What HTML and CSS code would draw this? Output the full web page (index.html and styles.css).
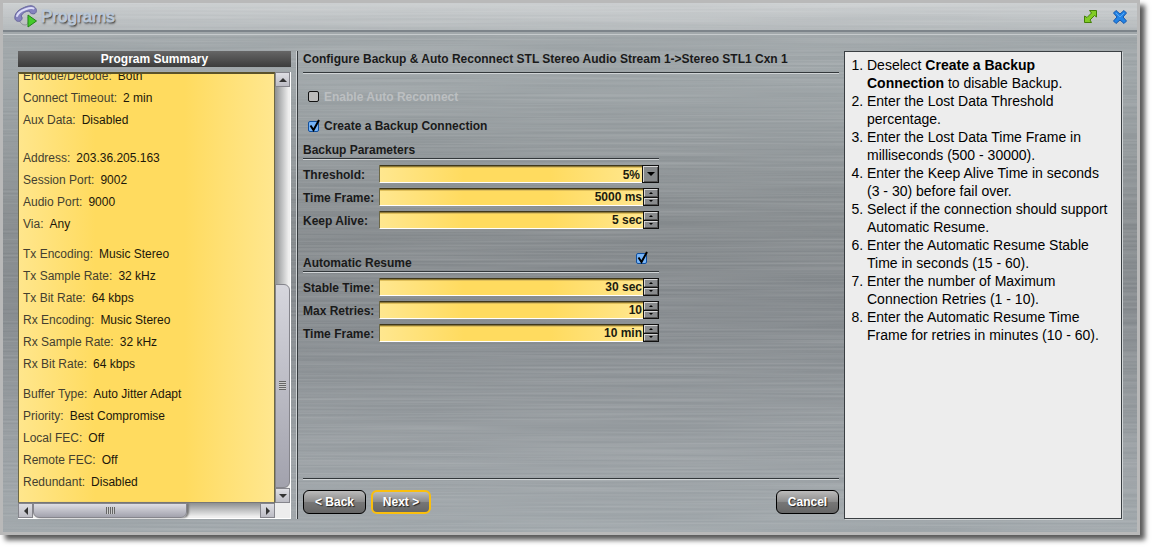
FILE: index.html
```html
<!DOCTYPE html>
<html lang="en">
<head>
<meta charset="utf-8">
<title>Programs</title>
<link rel="stylesheet" href="styles.css">
</head>
<body>
<main class="window">
  <svg class="brushed" aria-hidden="true">
    <filter id="brush" x="0" y="0" width="100%" height="100%">
      <feTurbulence type="fractalNoise" baseFrequency="0.004 0.5" numOctaves="2" seed="4"/>
      <feColorMatrix values="0 0 0 0 1  0 0 0 0 1  0 0 0 0 1  0.26 0 0 0 -0.08"/>
    </filter>
    <rect width="100%" height="100%" filter="url(#brush)"/>
  </svg>
  <header class="titlebar">
    <svg class="logo" width="24" height="24" viewBox="0 0 24 24" aria-hidden="true">
      <path d="M5 15.500C7 18 8 20 11 20c3 0 4-3 3-8" fill="none" stroke="#8e9499"/>
      <path d="M1 14C0 9 4 5 9 3c5-2.500 9-3 11.500-1C23 4 23 7 21 8.500c-2 1-5.500 0-5.500-2.500-4 0-7 2-8.500 5 1.500 1 1.500 3 0 4.500-2 1.500-5 1-6-1.500z" fill="#8583bd" stroke="#66659c"/>
      <path d="M3 11c1-3.500 5-5.500 8.500-6.800C15 3 18 2.500 19.500 3.500" fill="none" stroke="#dcdcf8" stroke-width="2" stroke-linecap="round"/>
      <path d="M14 10l8.500 6L14 22z" fill="#45cb2b" stroke="#238317"/>
    </svg>
    <h1 class="title">Programs</h1>
    <button class="tool" aria-label="Resize">
      <svg width="16" height="16" viewBox="0 0 16 16"><path d="M7.500 1.500h7V8l-2-1.500-4.500 4.500 1.500 2.500h-7V7l2.500 1.500L9.500 4z" fill="#82cc26" stroke="#438008"/></svg>
    </button>
    <button class="tool" aria-label="Close">
      <svg width="16" height="16" viewBox="0 0 16 16"><path d="M4 1.500l4 3.500L12 1.500 14.500 4 11 8l3.500 4-2.500 2.500L8 11l-4 3.500L1.500 12 5 8 1.500 4z" fill="#2384e6" stroke="#1457ad"/><path d="M4 4l4 4 4-4" fill="none" stroke="#5aa9f5"/></svg>
    </button>
  </header>

  <div class="content">
    <section class="summary">
      <h2 class="summary-title">Program Summary</h2>
      <div class="scroller">
        <div class="details">
          <dl class="group">
            <div class="item"><dt>Encode/Decode:</dt><dd>Both</dd></div>
            <div class="item"><dt>Connect Timeout:</dt><dd>2 min</dd></div>
            <div class="item"><dt>Aux Data:</dt><dd>Disabled</dd></div>
          </dl>
          <dl class="group group-address">
            <div class="item"><dt>Address:</dt><dd>203.36.205.163</dd></div>
            <div class="item"><dt>Session Port:</dt><dd>9002</dd></div>
            <div class="item"><dt>Audio Port:</dt><dd>9000</dd></div>
            <div class="item"><dt>Via:</dt><dd>Any</dd></div>
          </dl>
          <dl class="group">
            <div class="item"><dt>Tx Encoding:</dt><dd>Music Stereo</dd></div>
            <div class="item"><dt>Tx Sample Rate:</dt><dd>32 kHz</dd></div>
            <div class="item"><dt>Tx Bit Rate:</dt><dd>64 kbps</dd></div>
            <div class="item"><dt>Rx Encoding:</dt><dd>Music Stereo</dd></div>
            <div class="item"><dt>Rx Sample Rate:</dt><dd>32 kHz</dd></div>
            <div class="item"><dt>Rx Bit Rate:</dt><dd>64 kbps</dd></div>
          </dl>
          <dl class="group">
            <div class="item"><dt>Buffer Type:</dt><dd>Auto Jitter Adapt</dd></div>
            <div class="item"><dt>Priority:</dt><dd>Best Compromise</dd></div>
            <div class="item"><dt>Local FEC:</dt><dd>Off</dd></div>
            <div class="item"><dt>Remote FEC:</dt><dd>Off</dd></div>
            <div class="item"><dt>Redundant:</dt><dd>Disabled</dd></div>
          </dl>
        </div>
        <div class="bar bar-v">
          <button class="arrow" aria-label="Scroll up"><svg width="8" height="4"><path d="M4 0l4 4H0z"/></svg></button>
          <div class="track-v"><div class="thumb-v"><span class="grip-v"></span></div></div>
          <button class="arrow" aria-label="Scroll down"><svg width="8" height="4"><path d="M0 0h8L4 4z"/></svg></button>
        </div>
        <div class="bar bar-h">
          <button class="arrow" aria-label="Scroll left"><svg width="4" height="8"><path d="M4 0v8L0 4z"/></svg></button>
          <div class="track-h"><div class="thumb-h"><span class="grip-h"></span></div></div>
          <button class="arrow" aria-label="Scroll right"><svg width="4" height="8"><path d="M0 0l4 4-4 4z"/></svg></button>
        </div>
        <div class="corner"></div>
      </div>
    </section>

    <form class="wizard">
      <h2 class="heading">Configure Backup &amp; Auto Reconnect STL Stereo Audio Stream 1-&gt;Stereo STL1 Cxn 1</h2>
      <label class="option option-off"><input class="check" type="checkbox" disabled>Enable Auto Reconnect</label>
      <label class="option"><input class="check" type="checkbox" checked>Create a Backup Connection</label>

      <section class="params">
        <h3 class="subheading">Backup Parameters</h3>
        <div class="row">
          <label for="threshold">Threshold:</label>
          <select class="field" id="threshold"><option>5%</option></select>
          <span class="drop" aria-hidden="true"><svg width="8" height="4"><path d="M0 0h8L4 4z"/></svg></span>
        </div>
        <div class="row">
          <label for="frame">Time Frame:</label>
          <input class="field" id="frame" type="text" value="5000 ms">
          <span class="spin"><button type="button" aria-label="Increase"><svg width="4" height="2"><path d="M2 0l2 2H0z"/></svg></button><button type="button" aria-label="Decrease"><svg width="4" height="2"><path d="M0 0h4L2 2z"/></svg></button></span>
        </div>
        <div class="row">
          <label for="alive">Keep Alive:</label>
          <input class="field" id="alive" type="text" value="5 sec">
          <span class="spin"><button type="button" aria-label="Increase"><svg width="4" height="2"><path d="M2 0l2 2H0z"/></svg></button><button type="button" aria-label="Decrease"><svg width="4" height="2"><path d="M0 0h4L2 2z"/></svg></button></span>
        </div>
      </section>

      <section class="params params-resume">
        <h3 class="subheading"><label for="resume">Automatic Resume</label><input class="check" id="resume" type="checkbox" checked></h3>
        <div class="row">
          <label for="stable">Stable Time:</label>
          <input class="field" id="stable" type="text" value="30 sec">
          <span class="spin"><button type="button" aria-label="Increase"><svg width="4" height="2"><path d="M2 0l2 2H0z"/></svg></button><button type="button" aria-label="Decrease"><svg width="4" height="2"><path d="M0 0h4L2 2z"/></svg></button></span>
        </div>
        <div class="row">
          <label for="retries">Max Retries:</label>
          <input class="field" id="retries" type="text" value="10">
          <span class="spin"><button type="button" aria-label="Increase"><svg width="4" height="2"><path d="M2 0l2 2H0z"/></svg></button><button type="button" aria-label="Decrease"><svg width="4" height="2"><path d="M0 0h4L2 2z"/></svg></button></span>
        </div>
        <div class="row">
          <label for="retryframe">Time Frame:</label>
          <input class="field" id="retryframe" type="text" value="10 min">
          <span class="spin"><button type="button" aria-label="Increase"><svg width="4" height="2"><path d="M2 0l2 2H0z"/></svg></button><button type="button" aria-label="Decrease"><svg width="4" height="2"><path d="M0 0h4L2 2z"/></svg></button></span>
        </div>
      </section>

      <footer class="actions">
        <button class="btn" type="button">&lt; Back</button>
        <button class="btn btn-next" type="button">Next &gt;</button>
        <button class="btn btn-cancel" type="button">Cancel</button>
      </footer>
    </form>

    <aside class="help">
      <ol class="steps">
        <li>Deselect <b>Create a Backup Connection</b> to disable Backup.</li>
        <li>Enter the Lost Data Threshold percentage.</li>
        <li>Enter the Lost Data Time Frame in milliseconds (500 - 30000).</li>
        <li>Enter the Keep Alive Time in seconds (3 - 30) before fail over.</li>
        <li>Select if the connection should support Automatic Resume.</li>
        <li>Enter the Automatic Resume Stable Time in seconds (15 - 60).</li>
        <li>Enter the number of Maximum Connection Retries (1 - 10).</li>
        <li>Enter the Automatic Resume Time Frame for retries in minutes (10 - 60).</li>
      </ol>
    </aside>
  </div>
</main>
</body>
</html>
```
FILE: styles.css
```css
* { box-sizing: border-box; }

body {
  margin: 0;
  height: 100vh;
  padding: 0 15px 15px 0;
  display: flex;
  background: #fff;
  font: 12px/16px "Liberation Sans", Arial, sans-serif;
  color: #1a1a1a;
}

h1, h2, h3, dl, dd, ol { margin: 0; padding: 0; }
button { padding: 0; font: inherit; }
svg { display: block; }

.window {
  flex: 1;
  min-width: 0;
  position: relative;
  isolation: isolate;
  display: flex;
  flex-direction: column;
  border: 3px solid #b9b9b9;
  background: linear-gradient(#9fa5a8 0, #9ba2a5 14%, #84898c 42%, #82878b 58%, #999fa3 88%, #9ea5a9);
  box-shadow: 5px 5px 5px rgba(0, 0, 0, .65);
}

.brushed {
  position: absolute;
  inset: 0;
  width: 100%;
  height: 100%;
  z-index: -1;
}

.titlebar {
  height: 32px;
  flex: none;
  display: flex;
  align-items: center;
  gap: 14px;
  padding: 0 9px 4px 11px;
  background: linear-gradient(rgba(255, 255, 255, .45), rgba(255, 255, 255, .2));
  background-size: 100% 27px;
  background-repeat: no-repeat;
  border-bottom: 1px solid #c6cacc;
  box-shadow: inset 0 -2px #a2a8ab, inset 0 -4px #7d848a;
}

.title {
  margin-left: -11px;
  margin-right: auto;
  font-size: 17px;
  line-height: 24px;
  font-weight: normal;
  color: #c3d0df;
  -webkit-text-stroke: 1px #b9c6d6;
  text-shadow: 1px 1px 1px #3a3f45, 1px 2px 2px #555;
}

.tool { border: 0; background: none; }

.content {
  flex: 1;
  min-height: 0;
  display: grid;
  grid-template-columns: 273px minmax(0, 1fr) 278px;
  gap: 5px;
  padding: 16px 15px 13px;
}

.summary { display: flex; flex-direction: column; gap: 5px; min-height: 0; }

.summary-title {
  font-size: 12px;
  line-height: 16px;
  text-align: center;
  color: #fff;
  background: linear-gradient(#666, #3c3c3c);
}

.scroller {
  flex: 1;
  min-height: 0;
  display: grid;
  grid-template: minmax(0, 1fr) 15px / minmax(0, 1fr) 15px;
  border-right: 1px solid #fff;
  border-bottom: 1px solid #fff;
}

.details {
  display: flex;
  flex-direction: column;
  justify-content: flex-end;
  gap: 8px;
  overflow: hidden;
  padding: 0 4px 9px;
  border: 1px solid #6d6845;
  border-top: 2px solid #5b522a;
  border-bottom-color: #777;
  background: linear-gradient(90deg, #ffe68c, #ffdb5f 30%, #ffdb5f 65%, #ffe78f);
}

.group-address { margin-top: 8px; }

.item { display: flex; gap: 6px; line-height: 22px; white-space: nowrap; }
.item dt { color: #443f30; }
.item dd { color: #1c170a; }

.bar { display: flex; }
.bar-v { flex-direction: column; }

.arrow {
  width: 15px;
  height: 15px;
  flex: none;
  display: grid;
  place-items: center;
  border: 1px solid #85858c;
  background: linear-gradient(#dedee3, #bcbcc4);
}

.arrow svg { fill: #333; }

.track-v {
  flex: 1;
  display: flex;
  flex-direction: column;
  justify-content: flex-end;
  background: linear-gradient(90deg, #8c8f91, #eee 90%);
}

.thumb-v {
  height: 51%;
  display: grid;
  place-items: center;
  border: 1px solid #85858c;
  border-radius: 0 6px 6px 0;
  background: linear-gradient(#d6d6dd, #a2a2ad);
}

.track-h { flex: 1; background: linear-gradient(#8c8f91, #eee 90%); }

.thumb-h {
  width: 68%;
  height: 100%;
  display: grid;
  place-items: center;
  border: 1px solid #85858c;
  border-radius: 0 0 6px 6px;
  background: linear-gradient(#dedee4, #a2a2ad);
  box-shadow: 2px 0 2px #777;
}

.grip-v { width: 7px; height: 9px; background: repeating-linear-gradient(#666 0 1px, #ccc 1px 2px); }
.grip-h { width: 9px; height: 7px; background: repeating-linear-gradient(90deg, #666 0 1px, #ccc 1px 2px); }
.corner { background: #ededed; }

.wizard {
  display: flex;
  flex-direction: column;
  align-items: flex-start;
  border-left: 1px solid #d0d4d6;
  box-shadow: inset 1px 0 #33383b;
  padding-left: 6px;
  font-weight: bold;
}

.heading {
  align-self: stretch;
  font-size: 12px;
  line-height: 16px;
  white-space: nowrap;
  padding-bottom: 5px;
  border-bottom: 1px solid #33383b;
  box-shadow: 0 1px #d0d4d6;
}

.option {
  display: flex;
  align-items: center;
  gap: 3px;
  margin-left: 4px;
  margin-top: 13px;
}

.heading + .option { margin-top: 16px; }
.option-off { color: #bcbfc1; }

.check {
  appearance: none;
  width: 14px;
  height: 14px;
  margin: 0;
  background: url("data:image/svg+xml,%3Csvg xmlns='http://www.w3.org/2000/svg' width='14' height='14'%3E%3Crect x='1.500' y='1.500' width='10' height='10' rx='1.500' fill='%23bcbcbc' stroke='%23111'/%3E%3C/svg%3E") no-repeat;
}

.check:checked {
  background-image: url("data:image/svg+xml,%3Csvg xmlns='http://www.w3.org/2000/svg' width='14' height='14'%3E%3Crect x='1.500' y='2.500' width='10' height='10' rx='1.500' fill='%2377b4f7' stroke='%23124f9c'/%3E%3Cpath d='M3.500 6.500l3 4.500L12 1' fill='none' stroke='%23000' stroke-width='2'/%3E%3C/svg%3E");
}

.params {
  width: 356px;
  display: flex;
  flex-direction: column;
  gap: 5px;
  margin-top: 8px;
}

.params-resume { margin-top: 22px; }

.subheading {
  display: flex;
  align-items: flex-end;
  justify-content: space-between;
  padding-right: 10px;
  font-size: 12px;
  line-height: 16px;
  border-bottom: 1px solid #33383b;
  box-shadow: 0 1px #d0d4d6;
}

.params-resume .subheading { height: 21px; }
.subheading .check { align-self: flex-start; }

.row { display: flex; height: 18px; }
.subheading + .row { margin-top: 1px; }
.row label { width: 76px; flex: none; line-height: 20px; }

.field {
  appearance: none;
  flex: 1;
  min-width: 0;
  margin: 0;
  padding: 0 1px 0 0;
  border: 0;
  border-left: 1px solid #6d6845;
  border-bottom: 1px solid #fff;
  border-radius: 0;
  outline: 0;
  font: bold 12px/14px "Liberation Sans", Arial, sans-serif;
  color: #1c1c10;
  text-align: right;
  background: linear-gradient(90deg, #ffe78f, #ffdb5f 32%, #ffdb5f 65%, #ffe78f);
  box-shadow: inset 0 1px #40381c, inset 0 2px #8b7838, inset 0 3px #dfbf5b;
}

select.field { text-align-last: right; padding-right: 2px; padding-top: 2px; }

.drop {
  width: 17px;
  display: grid;
  place-items: center;
  border: 1px solid #111;
  background: #85888a;
  box-shadow: inset 1px 1px #d6d6d6, inset -1px -1px #555;
}

.spin { width: 16px; display: flex; flex-direction: column; gap: 1px; background: #111; padding: 1px; }

.spin button {
  flex: 1;
  display: grid;
  place-items: center;
  border: 1px solid;
  border-color: #d6d6d6 #555 #555 #d6d6d6;
  background: #898b8d;
}

.actions {
  align-self: stretch;
  margin-top: auto;
  display: flex;
  gap: 5px;
  padding: 11px 0 5px;
  border-top: 1px solid #33383b;
  box-shadow: inset 0 1px #d0d4d6;
}

.btn {
  width: 63px;
  height: 24px;
  border: 1px solid #000;
  border-radius: 6px;
  font-weight: bold;
  color: #fff;
  text-shadow: 1px 1px 1px #222;
  background: linear-gradient(#bbb, #8b8b8b 50%, #777 50%, #666);
}

.btn-next { width: 60px; border: 2px solid #fbbf0c; }
.btn-cancel { margin-left: auto; }

.help {
  border: 1px solid #3a3f43;
  box-shadow: 1px 1px #d0d4d6;
  background: #ededed;
  padding: 4px 8px 4px 4px;
  overflow: hidden;
}

.steps {
  padding-left: 18px;
  font-size: 14px;
  line-height: 18px;
  color: #000;
}
```
